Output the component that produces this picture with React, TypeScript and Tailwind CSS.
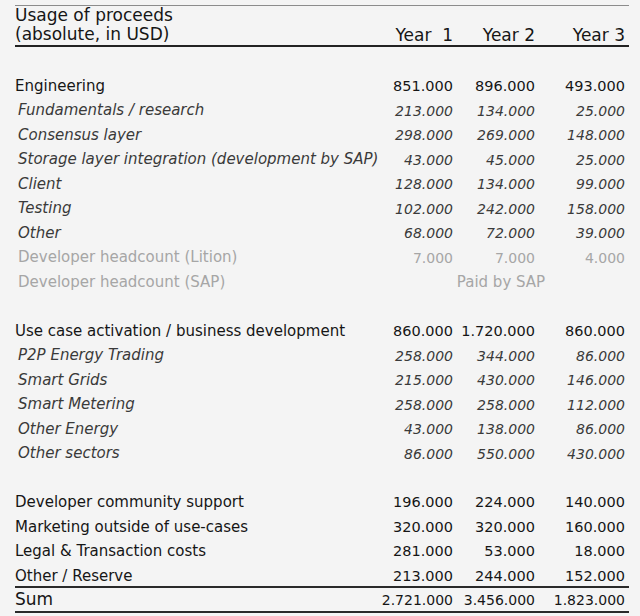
type Kind = 'main' | 'sub' | 'gray' | 'blank' | 'paid' | 'last' | 'sum';

type Row = { kind: Kind; label?: string; v?: [string, string, string] };

const rows: Row[] = [
  { kind: 'main', label: 'Engineering', v: ['851.000', '896.000', '493.000'] },
  { kind: 'sub', label: 'Fundamentals / research', v: ['213.000', '134.000', '25.000'] },
  { kind: 'sub', label: 'Consensus layer', v: ['298.000', '269.000', '148.000'] },
  { kind: 'sub', label: 'Storage layer integration (development by SAP)', v: ['43.000', '45.000', '25.000'] },
  { kind: 'sub', label: 'Client', v: ['128.000', '134.000', '99.000'] },
  { kind: 'sub', label: 'Testing', v: ['102.000', '242.000', '158.000'] },
  { kind: 'sub', label: 'Other', v: ['68.000', '72.000', '39.000'] },
  { kind: 'gray', label: 'Developer headcount (Lition)', v: ['7.000', '7.000', '4.000'] },
  { kind: 'paid', label: 'Developer headcount (SAP)' },
  { kind: 'blank' },
  { kind: 'main', label: 'Use case activation / business development', v: ['860.000', '1.720.000', '860.000'] },
  { kind: 'sub', label: 'P2P Energy Trading', v: ['258.000', '344.000', '86.000'] },
  { kind: 'sub', label: 'Smart Grids', v: ['215.000', '430.000', '146.000'] },
  { kind: 'sub', label: 'Smart Metering', v: ['258.000', '258.000', '112.000'] },
  { kind: 'sub', label: 'Other Energy', v: ['43.000', '138.000', '86.000'] },
  { kind: 'sub', label: 'Other sectors', v: ['86.000', '550.000', '430.000'] },
  { kind: 'blank' },
  { kind: 'main', label: 'Developer community support', v: ['196.000', '224.000', '140.000'] },
  { kind: 'main', label: 'Marketing outside of use-cases', v: ['320.000', '320.000', '160.000'] },
  { kind: 'main', label: 'Legal & Transaction costs', v: ['281.000', '53.000', '18.000'] },
  { kind: 'last', label: 'Other / Reserve', v: ['213.000', '244.000', '152.000'] },
  { kind: 'sum', label: 'Sum', v: ['2.721.000', '3.456.000', '1.823.000'] },
];

const grid = 'grid grid-cols-[360px_78px_82px_94px] items-center';

function TableRow({ row }: { row: Row }) {
  if (row.kind === 'blank') return <div className="h-[24.5px]" />;

  let rowCls = 'h-[24.5px]';
  let labelCls = 'text-[15px] text-[#161616]';
  let numCls = 'text-[14.5px] text-[#161616]';

  if (row.kind === 'sub') {
    labelCls = 'pl-[3px] text-[15px] italic font-light text-[#3a3a3a]';
    numCls = 'text-[14px] italic font-light text-[#3a3a3a]';
  }
  if (row.kind === 'gray' || row.kind === 'paid') {
    labelCls = 'pl-[3px] text-[15px] text-[#a6a6a6]';
    numCls = 'text-[14px] text-[#a6a6a6]';
  }
  if (row.kind === 'last') rowCls = 'h-[24.5px] pt-[3px] border-b-2 border-[#2a2a2a]';
  if (row.kind === 'sum') {
    rowCls = 'h-[24.5px] border-b-2 border-[#2a2a2a]';
    labelCls = 'text-[17px] text-[#161616]';
    numCls = 'text-[14px] text-[#161616]';
  }

  return (
    <div className={`${grid} ${rowCls}`}>
      <div className={`${labelCls} whitespace-nowrap leading-none`}>{row.label}</div>
      {row.kind === 'paid' ? (
        <div className="col-span-3 pr-[2px] text-center text-[15px] leading-none text-[#a6a6a6]">Paid by SAP</div>
      ) : (
        row.v!.map((n, i) => (
          <div key={i} className={`${numCls} whitespace-nowrap text-right leading-none ${i === 2 ? 'pr-[4px]' : ''}`}>
            {n}
          </div>
        ))
      )}
    </div>
  );
}

export default function App() {
  return (
    <div
      className="h-[616px] w-[640px] overflow-hidden bg-[#f4f4f4] pl-[15px] pr-[11px] pt-[5px]"
      style={{ fontFamily: '"DejaVu Sans", "Liberation Sans", sans-serif' }}
    >
      <div className="border-t border-[#8c8c8c]" />
      <div className="grid h-[41px] grid-cols-[360px_78px_82px_94px] border-b-2 border-[#222] text-[17px] leading-[19px] text-[#161616]">
        <div>
          <div>Usage of proceeds</div>
          <div>(absolute, in USD)</div>
        </div>
        <div className="self-end whitespace-pre text-right">Year  1</div>
        <div className="self-end text-right">Year 2</div>
        <div className="self-end pr-[4px] text-right">Year 3</div>
      </div>
      <div className="h-[26.75px]" />
      {rows.map((r, i) => (
        <TableRow key={i} row={r} />
      ))}
    </div>
  );
}
